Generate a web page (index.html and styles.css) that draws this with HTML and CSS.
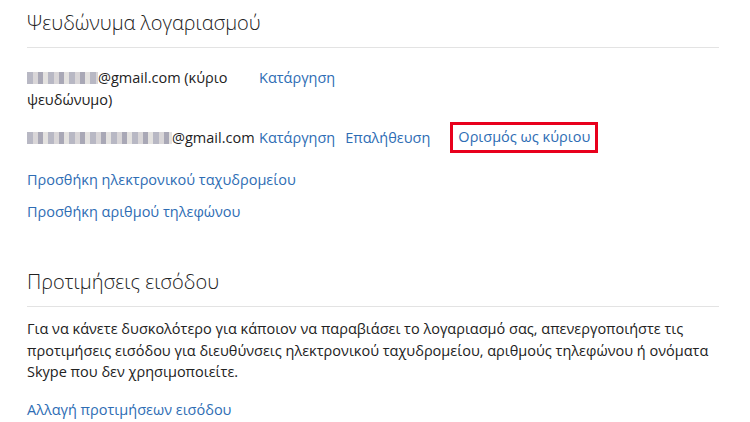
FILE: index.html
```html
<!DOCTYPE html>
<html>
<head>
<meta charset="utf-8">
<link rel="stylesheet" href="styles.css">
</head>
<body>

<div class="page">
    <div class="section">
        <h2 class="section-title">Ψευδώνυμα λογαριασμού</h2>

        <div class="alias-list">
            <div class="alias-row">
                <div class="alias-name"><span class="blur blur-short"></span>@gmail.com (κύριο ψευδώνυμο)</div>
                <div class="alias-actions">
                    <a href="#">Κατάργηση</a>
                </div>
            </div>
            <div class="alias-row primary-candidate">
                <div class="alias-name"><span class="blur blur-long"></span>@gmail.com</div>
                <div class="alias-actions">
                    <a href="#">Κατάργηση</a>
                    <a href="#">Επαλήθευση</a>
                    <a href="#" class="highlight">Ορισμός ως κύριου</a>
                </div>
            </div>
        </div>

        <div class="add-links">
            <a href="#">Προσθήκη ηλεκτρονικού ταχυδρομείου</a>
            <a href="#">Προσθήκη αριθμού τηλεφώνου</a>
        </div>
    </div>

    <div class="section">
        <h2 class="section-title">Προτιμήσεις εισόδου</h2>
        <p class="note">
            Για να κάνετε δυσκολότερο για κάποιον να παραβιάσει το λογαριασμό σας, απενεργοποιήστε τις
            προτιμήσεις εισόδου για διευθύνσεις ηλεκτρονικού ταχυδρομείου, αριθμούς τηλεφώνου ή ονόματα
            Skype που δεν χρησιμοποιείτε.
        </p>
        <a href="#" class="single-link">Αλλαγή προτιμήσεων εισόδου</a>
    </div>
</div>

</body>
</html>
```

FILE: styles.css
```css
body {
    margin: 0;
    background: #FFFFFF;
    color: #222222;
    font-family: "Open Sans", "Noto Sans", sans-serif;
    font-size: 14.5px;
    line-height: 21.5px;
}

a {
    color: #2E6DB4;
    text-decoration: none;
}

.page {
    width: 692px;
    padding: 9px 0 0 27px;
}

.section-title {
    margin: 0;
    padding-bottom: 10px;
    border-bottom: 1px solid #E3E3E3;
    font-size: 20px;
    font-weight: 300;
    line-height: 28px;
    color: #222222;
}

.alias-list {
    margin-top: 19px;
}

.alias-row {
    display: flex;
    align-items: flex-start;
    margin-bottom: 15px;
}

.alias-row + .alias-row {
    margin-top: -3px;
}

.primary-candidate {
    align-items: center;
}

.primary-candidate .alias-name {
    white-space: nowrap;
}

.alias-name {
    flex: none;
    width: 228px;
    padding-right: 4px;
}

.alias-actions {
    display: flex;
    align-items: center;
    gap: 10px;
}

.alias-actions .highlight {
    margin-left: 10px;
    padding: 1px 5px 2px;
    border: 3px solid #E8001C;
}

.blur {
    display: inline-block;
    height: 12px;
    vertical-align: -1px;
    background: repeating-linear-gradient(90deg, #B8B8C4 0 6px, #D9D6D8 6px 11px, #A9A8B6 11px 16px, #E4E2E0 16px 21px);
}

.blur-short {
    width: 71px;
}

.blur-long {
    width: 145px;
}

.add-links {
    display: flex;
    flex-direction: column;
    align-items: flex-start;
    gap: 10.5px;
    margin-top: 16px;
}

.alias-list .alias-row:last-child {
    margin-bottom: 0;
}

.section + .section {
    margin-top: 46px;
}

.note {
    margin: 11px 0 16px;
}

.single-link {
    display: inline-block;
}
```
